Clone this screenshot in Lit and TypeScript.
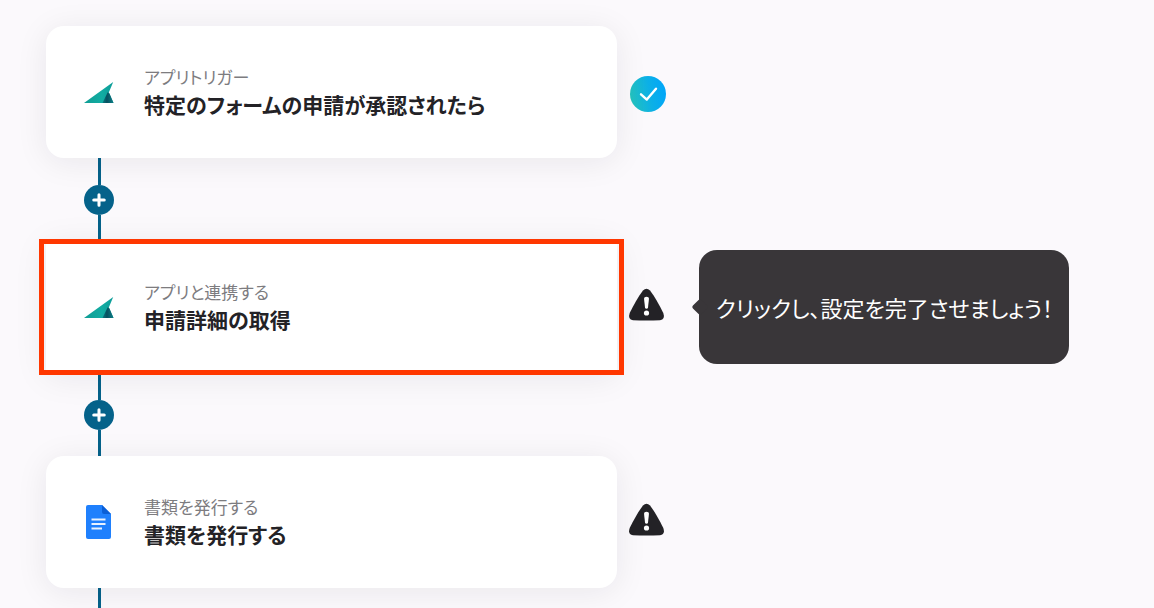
import { LitElement, html, css, svg, nothing } from "lit";
import { customElement, property } from "lit/decorators.js";
import { classMap } from "lit/directives/class-map.js";

interface Step {
  kind: string;
  title: string;
  icon: "sail" | "doc";
  done: boolean;
  active?: boolean;
  hint?: string;
}

const STEPS: Step[] = [
  { kind: "アプリトリガー", title: "特定のフォームの申請が承認されたら", icon: "sail", done: true },
  {
    kind: "アプリと連携する",
    title: "申請詳細の取得",
    icon: "sail",
    done: false,
    active: true,
    hint: "クリックし、設定を完了させましょう！",
  },
  { kind: "書類を発行する", title: "書類を発行する", icon: "doc", done: false },
];

const sailIcon = html`<svg width="30" height="34" viewBox="0 0 30 34" aria-hidden="true">
  <defs>
    <linearGradient id="sail" x1="0" y1="0" x2="1" y2="0">
      <stop offset="0" stop-color="#0f9d94" />
      <stop offset="0.6" stop-color="#12aca2" />
      <stop offset="1" stop-color="#0c9c98" />
    </linearGradient>
    <linearGradient id="keel" x1="0" y1="0" x2="1" y2="0">
      <stop offset="0" stop-color="#0a7880" />
      <stop offset="0.4" stop-color="#06505f" />
      <stop offset="1" stop-color="#0d8088" />
    </linearGradient>
  </defs>
  <path d="M0 28 29.200 7 24.800 17.500 29.500 28Z" fill="url(#sail)" />
  <path d="M23.700 17.300 18.500 28H29.500L25.500 18.500Z" fill="url(#keel)" />
</svg>`;

const docIcon = html`<svg width="30" height="34" viewBox="0 0 30 34" aria-hidden="true">
  <path d="M4 0H18L27 9V32Q27 34 25 34H4Q2 34 2 32V2Q2 0 4 0Z" fill="#1f80fd" />
  <path d="M18 0 27 9H20Q18 9 18 7Z" fill="#0b5fd6" />
  <path d="M7.500 14.500H21.500M7.500 19H21.500M7.500 23.500H18" stroke="#e8f2ff" stroke-width="2" />
</svg>`;

const doneIcon = html`<svg width="36" height="36" viewBox="0 0 36 36" role="img" aria-label="完了">
  <defs>
    <linearGradient id="done" x1="0" y1="0.6" x2="1" y2="0.4">
      <stop offset="0" stop-color="#25c3bd" />
      <stop offset="0.55" stop-color="#0cb0e6" />
      <stop offset="1" stop-color="#00a6fa" />
    </linearGradient>
  </defs>
  <circle cx="18" cy="18" r="18" fill="url(#done)" />
  <path d="M11 18.300 16.800 23.600 26 12.700" fill="none" stroke="#fff" stroke-width="2.400" stroke-linecap="round" stroke-linejoin="round" />
</svg>`;

const warnIcon = html`<svg width="36" height="34" viewBox="1 0 36 34" overflow="visible" role="img" aria-label="未設定">
  <path d="M14 2.500Q17.500 -1 21 2.500C26 9 30 16.500 34.300 25Q36.500 31.500 31 32.200Q17.500 33 4 32.200Q-1.500 31.500 0.700 25C5 16.500 9 9 14 2.500Z" fill="#232226" />
  <path d="M15 10.500Q15 8.800 17.500 8.800Q20 8.800 20 10.500L19 19.500Q18.700 20.800 17.500 20.800Q16.300 20.800 16 19.500Z" fill="#fff" />
  <circle cx="17.500" cy="25" r="2.600" fill="#fff" />
</svg>`;

const plusIcon = svg`<path d="M6 1.500V10.500M1.500 6H10.500" stroke="#fff" stroke-width="2.600" stroke-linecap="round" />`;

@customElement("flow-step")
class FlowStep extends LitElement {
  @property({ attribute: false }) step!: Step;

  static styles = css`
    :host {
      display: grid;
      grid-template-columns: minmax(0, 571px) 36px auto;
      justify-content: start;
      align-items: center;
      column-gap: 13px;
    }
    .card {
      position: relative;
      display: flex;
      align-items: center;
      gap: 30px;
      box-sizing: border-box;
      width: 100%;
      min-height: 132px;
      padding: 24px 38px;
      border: 0;
      border-radius: 18px;
      background: #fff;
      box-shadow: 0 4px 32px rgba(30, 26, 34, 0.08);
      font: inherit;
      color: inherit;
      text-align: left;
      cursor: pointer;
    }
    .active {
      border-radius: 0;
    }
    .active::after {
      content: "";
      position: absolute;
      inset: -2px -7px;
      border: 5px solid #ff3700;
    }
    .icon {
      display: flex;
      flex: none;
    }
    .text {
      display: flex;
      flex-direction: column;
      min-width: 0;
      padding-bottom: 2px;
    }
    .kind {
      font-size: 17px;
      line-height: 26px;
      color: #7d7c7f;
    }
    .title {
      font-size: 21px;
      line-height: 28px;
      font-weight: 700;
      color: #232226;
    }
    .status {
      display: flex;
      justify-content: center;
      padding-bottom: 4px;
    }
    .done {
      padding: 4px 0 0;
    }
    .hint {
      position: relative;
      display: flex;
      align-items: center;
      box-sizing: border-box;
      min-height: 114px;
      margin-left: 20px;
      padding: 0 16px 0 17px;
      border-radius: 18px;
      background: #393639;
      color: #fff;
      font-size: 22px;
      line-height: 30px;
      white-space: nowrap;
    }
    .hint::before {
      content: "";
      position: absolute;
      left: -5px;
      top: 50%;
      width: 12px;
      height: 12px;
      margin-top: -6px;
      border-radius: 2px;
      background: #393639;
      transform: rotate(45deg);
    }
  `;

  render() {
    const s = this.step;
    return html`
      <button type="button" class=${classMap({ card: true, active: !!s.active })}>
        <span class="icon">${s.icon === "sail" ? sailIcon : docIcon}</span>
        <span class="text">
          <span class="kind">${s.kind}</span>
          <span class="title">${s.title}</span>
        </span>
      </button>
      <span class=${classMap({ status: true, done: s.done })}>${s.done ? doneIcon : warnIcon}</span>
      ${s.hint ? html`<div class="hint" role="tooltip">${s.hint}</div>` : nothing}
    `;
  }
}

@customElement("app-root")
class AppRoot extends LitElement {
  static styles = css`
    :host {
      display: flex;
      flex-direction: column;
      box-sizing: border-box;
      min-height: 100vh;
      padding: 26px 46px 0;
      background: #fbf9fc;
      font-family: "Noto Sans CJK JP", "Noto Sans", sans-serif;
      font-feature-settings: "palt";
    }
    .connector {
      display: flex;
      flex-direction: column;
      align-items: center;
      width: 30px;
      height: 83px;
      margin-left: 38px;
    }
    .line {
      flex: 1;
      width: 3px;
      background: #05628a;
    }
    .add {
      display: flex;
      align-items: center;
      justify-content: center;
      width: 30px;
      height: 30px;
      padding: 0;
      border: 0;
      border-radius: 50%;
      background: #05628a;
      cursor: pointer;
    }
    .tail {
      flex: 1;
      height: auto;
      min-height: 16px;
    }
  `;

  render() {
    return html`
      ${STEPS.map(
        (step, i) => html`
          <flow-step .step=${step}></flow-step>
          ${i < STEPS.length - 1
            ? html`<div class="connector">
                <span class="line"></span>
                <button type="button" class="add" aria-label="ステップを追加">
                  <svg width="14" height="14" viewBox="0 0 12 12" aria-hidden="true">${plusIcon}</svg>
                </button>
                <span class="line"></span>
              </div>`
            : html`<div class="connector tail"><span class="line"></span></div>`}
        `
      )}
    `;
  }
}
